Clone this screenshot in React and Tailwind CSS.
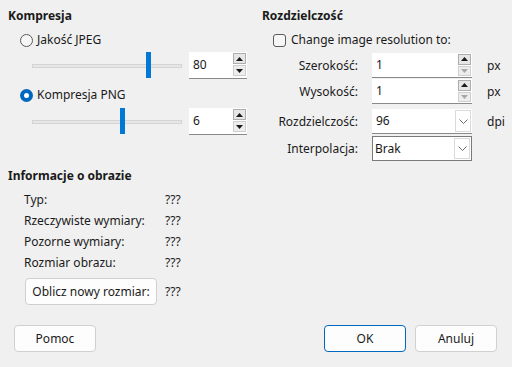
import React from 'react';

const Radio = ({ checked }) =>
  checked ? (
    <span className="w-[13px] h-[13px] rounded-full bg-[#0067c0] flex items-center justify-center shrink-0">
      <span className="w-[5px] h-[5px] rounded-full bg-white" />
    </span>
  ) : (
    <span className="w-[13px] h-[13px] rounded-full border border-[#5a5a5a] bg-[#f6f6f6] shrink-0" />
  );

const Arrow = ({ up, dim }) => (
  <svg width="7" height="4" viewBox="0 0 7 4">
    <polygon points={up ? '0,4 7,4 3.5,0' : '0,0 7,0 3.5,4'} fill={dim ? '#a8a8a8' : '#1a1a1a'} />
  </svg>
);

const SpinButtons = ({ dimDown }) => (
  <div className="flex flex-col gap-[1px] py-[1px] pr-[1px]">
    <div className="w-[13px] h-[11px] border border-[#adadad] bg-[#e6e6e6] flex items-center justify-center">
      <Arrow up />
    </div>
    <div className="w-[13px] h-[11px] border border-[#cfcfcf] bg-[#ededed] flex items-center justify-center">
      <Arrow dim={dimDown} />
    </div>
  </div>
);

const Chevron = () => (
  <svg width="9" height="5" viewBox="0 0 9 5">
    <polyline points="0.5,0.5 4.5,4.5 8.5,0.5" fill="none" stroke="#6b6b6b" strokeWidth="1" />
  </svg>
);

const Slider = ({ value, thumb }) => (
  <div className="flex items-center h-[27px]">
    <div className="relative w-[150px] h-[27px] ml-[24px] flex items-center">
      <div className="w-full h-[4px] bg-[#e7e7e7] border border-[#d4d4d4]" />
      <div className="absolute top-0 w-[5px] h-[26px] bg-[#0078d4]" style={{ left: thumb }} />
    </div>
    <div className="ml-[7px] flex h-[27px] bg-white border-b border-[#8a8a8a]">
      <div className="w-[44px] pl-[4px] flex items-center text-[#1a1a1a]">{value}</div>
      <SpinButtons />
    </div>
  </div>
);

const FormRow = ({ label, children, unit, className }) => (
  <div className={`flex items-center h-[25px] ${className}`}>
    <div className="w-[96px] text-right text-[#1a1a1a]">{label}</div>
    <div className="ml-[14px] w-[100px] h-[25px]">{children}</div>
    <div className="ml-[15px] text-[#1a1a1a]">{unit}</div>
  </div>
);

const Button = ({ children, primary, className }) => (
  <button
    className={`h-[27px] rounded-[4px] bg-[#fdfdfd] text-[#1a1a1a] flex items-center justify-center ${
      primary ? 'border border-[#0067c0]' : 'border border-[#d0d0d0]'
    } ${className}`}
  >
    {children}
  </button>
);

const InfoRow = ({ label }) => (
  <div className="flex items-center h-[21px]">
    <div className="w-[157px] pl-4">{label}</div>
    <div>???</div>
  </div>
);

export default function App() {
  return (
    <div
      className="w-[512px] h-[367px] bg-[#f0f0f0] text-[12px] leading-4 text-[#1a1a1a] flex flex-col overflow-hidden"
      style={{ fontFamily: '"Noto Sans", "Open Sans", sans-serif' }}
    >
      {/* Top: compression + resolution */}
      <div className="flex">
        <div className="w-[256px] pl-2 pt-2 flex flex-col">
          <div className="h-4 font-bold">Kompresja</div>
          <div className="mt-2 h-4 pl-3 flex items-center gap-1">
            <Radio />
            <span>Jakość JPEG</span>
          </div>
          <div className="mt-1">
            <Slider value="80" thumb={114} />
          </div>
          <div className="mt-2 h-4 pl-3 flex items-center gap-1">
            <Radio checked />
            <span>Kompresja PNG</span>
          </div>
          <div className="mt-[5px]">
            <Slider value="6" thumb={88} />
          </div>
        </div>

        <div className="flex-1 pl-[6px] pt-2 flex flex-col">
          <div className="h-4 font-bold">Rozdzielczość</div>
          <div className="mt-2 h-4 pl-[11px] flex items-center gap-[5px]">
            <span className="w-[13px] h-[13px] rounded-[3px] border border-[#5a5a5a] bg-[#f6f6f6]" />
            <span>Change image resolution to:</span>
          </div>
          <FormRow label="Szerokość:" unit="px" className="mt-[5px]">
            <div className="flex h-full bg-white border-b border-[#8a8a8a]">
              <div className="flex-1 pl-[4px] flex items-center">1</div>
              <SpinButtons dimDown />
            </div>
          </FormRow>
          <FormRow label="Wysokość:" unit="px" className="mt-[1px]">
            <div className="flex h-full bg-white border-b border-[#8a8a8a]">
              <div className="flex-1 pl-[4px] flex items-center">1</div>
              <SpinButtons dimDown />
            </div>
          </FormRow>
          <FormRow label="Rozdzielczość:" unit="dpi" className="mt-[5px]">
            <div className="flex h-full bg-white border-b border-[#8a8a8a]">
              <div className="flex-1 pl-[4px] flex items-center">96</div>
              <div className="w-[16px] my-[1px] mr-[1px] border border-[#dadada] flex items-center justify-center">
                <Chevron />
              </div>
            </div>
          </FormRow>
          <FormRow label="Interpolacja:" unit="" className="mt-[2px]">
            <div className="flex h-full bg-white border border-[#7a7a7a]">
              <div className="flex-1 pl-[2px] flex items-center">Brak</div>
              <div className="w-[16px] my-[1px] mr-[1px] border border-[#dadada] flex items-center justify-center">
                <Chevron />
              </div>
            </div>
          </FormRow>
        </div>
      </div>

      {/* Image info */}
      <div className="pl-2 mt-[7px] flex flex-col">
        <div className="h-4 font-bold">Informacje o obrazie</div>
        <div className="mt-[5px] flex flex-col">
          <InfoRow label="Typ:" />
          <InfoRow label="Rzeczywiste wymiary:" />
          <InfoRow label="Pozorne wymiary:" />
          <InfoRow label="Rozmiar obrazu:" />
        </div>
        <div className="mt-[5px] flex items-center">
          <Button className="ml-[17px] w-[132px]">Oblicz nowy rozmiar:</Button>
          <span className="ml-2">???</span>
        </div>
      </div>

      {/* Dialog buttons */}
      <div className="mt-5 px-[14px] flex justify-between">
        <Button className="w-[82px]">Pomoc</Button>
        <div className="flex gap-[9px] pr-px">
          <Button primary className="w-[82px]">OK</Button>
          <Button className="w-[82px]">Anuluj</Button>
        </div>
      </div>
    </div>
  );
}
